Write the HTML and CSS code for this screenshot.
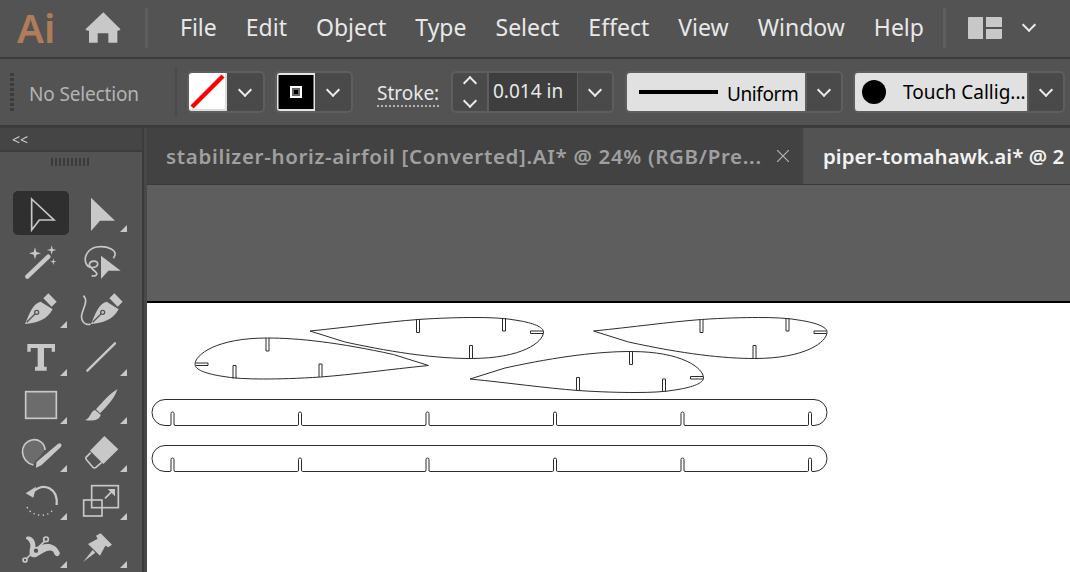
FILE: index.html
```html
<!DOCTYPE html>
<html lang="en">
<head>
  <meta charset="UTF-8" />
  <title>Adobe Illustrator</title>
  <link rel="stylesheet" href="styles.css">
</head>
<body>
  <div class="menubar">
    <span class="logo">Ai</span>
    <svg class="home" viewBox="255 36 108 96"><path d="M310 37L360 86Q365 92 352 92V128H325V100H293V128H267V92Q253 92 258 86Z"/></svg>
    <span class="vsep"></span>
    <nav class="menu">
      <span>File</span><span>Edit</span><span>Object</span><span>Type</span><span>Select</span><span>Effect</span><span>View</span><span>Window</span><span>Help</span>
    </nav>
    <span class="vsep"></span>
    <svg class="layout-icon" viewBox="0 0 34 22"><path d="M0 1Q0 0 1 0H15V22H1Q0 22 0 21ZM18 0H33Q34 0 34 1V10H18ZM18 12H34V21Q34 22 33 22H18Z"/></svg>
    <span class="chev layout-chev"></span>
  </div>

  <div class="controlbar">
    <span class="gripper"></span>
    <span class="selection-label">No Selection</span>
    <span class="ctrl-sep"></span>
    <div class="combo fill-combo">
      <svg class="swatch" viewBox="0 0 38 38"><rect width="38" height="38" fill="#fff"/><path d="M3 34L34 3" stroke="#f00" stroke-width="4.5"/><path d="M0 36H38V38H0ZM36 0H38V38H36Z" fill="#ddd"/></svg>
      <span class="chev-cell"><span class="chev"></span></span>
    </div>
    <div class="combo stroke-combo">
      <svg class="swatch" viewBox="0 0 38 38"><rect width="38" height="38" fill="#e4e4e4"/><rect x="1.5" y="2" width="35" height="34" fill="#000"/><rect x="13" y="13" width="12" height="12" fill="#fff"/><rect x="15" y="15" width="8" height="8" fill="#666"/><rect x="17" y="17" width="4" height="4" fill="#000"/></svg>
      <span class="chev-cell"><span class="chev"></span></span>
    </div>
    <span class="stroke-label">Stroke:</span>
    <div class="combo weight-combo">
      <span class="stepper"><span class="chev up"></span><span class="chev"></span></span>
      <span class="weight-value">0.014 in</span>
      <span class="chev-cell"><span class="chev"></span></span>
    </div>
    <div class="combo profile-combo">
      <span class="light-field profile-field"><span class="profile-line"></span><span class="profile-name">Uniform</span></span>
      <span class="chev-cell"><span class="chev"></span></span>
    </div>
    <div class="combo brush-combo">
      <span class="light-field brush-field"><span class="brush-dot"></span>Touch Callig...</span>
      <span class="chev-cell"><span class="chev"></span></span>
    </div>
  </div>

  <div class="workspace">
    <aside class="toolbar">
      <div class="toolbar-head"><span class="collapse">&lt;&lt;</span></div>
      <div class="toolbar-grip"></div>
      <div class="tools">
        <div class="tool active"><svg viewBox="39 198 168 132"><path d="M95 222L162 285H118L95 315Z" class="line"/></svg></div>
        <div class="tool more"><svg viewBox="219 198 168 132"><path d="M273 218L345 287H300L273 318Z"/></svg></div>

        <div class="tool"><svg viewBox="39 342 168 132"><path d="M82 455L145 395" class="line thick"/><path d="M105 367L109 381L123 385L109 389L105 403L101 389L87 385L101 381ZM155 361L158 372L169 375L158 378L155 389L152 378L141 375L152 372ZM160 400L162 408L170 410L162 412L160 420L158 412L150 410L158 408Z"/></svg></div>
        <div class="tool"><svg viewBox="219 342 168 132"><path d="M340 400C360 375 320 362 290 366C265 370 250 395 258 415C265 432 290 430 293 418C295 405 270 405 268 418C268 430 285 435 290 445C292 450 285 455 275 452" class="line"/><path d="M303 392L362 437H325L303 462Z"/></svg></div>

        <div class="tool more"><svg viewBox="39 486 168 132"><path d="M130 520L145 505L170 530L155 545ZM122 530C100 535 90 560 75 597C110 595 140 585 158 553Z"/><path d="M80 592L105 567" class="cut"/><circle cx="110" cy="562" r="6" class="cut"/></svg></div>
        <div class="tool"><svg viewBox="219 486 168 132"><g transform="translate(198 0)"><path d="M130 520L145 505L170 530L155 545ZM122 530C100 535 90 560 75 597C110 595 140 585 158 553Z"/><path d="M80 592L105 567" class="cut"/><circle cx="110" cy="562" r="6" class="cut"/></g><path d="M250 512C270 530 240 560 245 580C250 600 265 600 272 597" class="line"/></svg></div>

        <div class="tool more"><svg viewBox="39 -15 168 132"><path d="M82 12H165V35H155V24H132V80H140V92H105V80H113V24H92V35H82Z"/></svg></div>
        <div class="tool more"><svg viewBox="219 -15 168 132"><path d="M262 92L345 10" class="line thin-round"/></svg></div>

        <div class="tool more"><svg viewBox="39 129 168 132"><rect x="77" y="155" width="92" height="80" class="line grey-fill"/></svg></div>
        <div class="tool more"><svg viewBox="219 129 168 132"><path d="M352 148C345 175 320 200 300 220L288 208C310 185 330 160 352 148ZM285 210C270 215 272 235 255 240C275 245 300 240 302 224Z"/></svg></div>

        <div class="tool more"><svg viewBox="39 273 168 132"><path d="M100 375C60 365 55 310 95 300C115 295 135 310 135 330" class="line grey-fill"/><path d="M172 310C180 303 192 312 185 322L125 378L105 388L107 365Z" class="gap"/></svg></div>
        <div class="tool more"><svg viewBox="219 273 168 132"><path d="M313 288L355 328L310 372L270 332Z"/><path d="M272 338L258 352Q256 356 260 360L278 381Q283 386 288 382L305 367" class="line"/></svg></div>

        <div class="tool more"><svg viewBox="39 417 168 132"><path d="M100 455C130 425 175 445 170 495" class="line thick-ish"/><path d="M77 460L108 440L100 473Z"/><path d="M82 503C95 530 145 535 160 507" class="dots"/></svg></div>
        <div class="tool more"><svg viewBox="219 417 168 132"><rect x="275" y="437" width="80" height="66" class="line"/><rect x="251" y="480" width="55" height="48" class="line"/><path d="M315 475L338 452" class="line"/><path d="M323 447H345V469Z"/></svg></div>

        <div class="tool more"><svg viewBox="39 561 168 132"><path d="M80 590C100 585 110 610 105 625C125 610 165 600 180 640C175 655 165 650 160 635C145 625 130 640 110 650C95 655 85 650 90 625C95 610 85 600 77 596Z"/><path d="M75 660L140 598" class="line"/><circle cx="75" cy="660" r="6" class="line bg-fill"/><circle cx="138" cy="598" r="7" class="line bg-fill"/><circle cx="108" cy="632" r="9" class="line bg-fill"/></svg></div>
        <div class="tool more"><svg viewBox="219 561 168 132"><path d="M302 580L336 614L325 622L316 617L300 647L264 612L293 596L288 587ZM250 665L278 630L286 638Z"/></svg></div>
      </div>
    </aside>

    <main class="document">
      <div class="tabs">
        <div class="tab">
          <span class="tab-title">stabilizer-horiz-airfoil [Converted].AI* @ 24% (RGB/Pre...</span>
          <svg class="tab-close" viewBox="0 0 12 12"><path d="M0 0L12 12M12 0L0 12"/></svg>
        </div>
        <div class="tab current"><span class="tab-title">piper-tomahawk.ai* @ 2</span></div>
      </div>
      <div class="pasteboard"></div>
      <div class="artboard">
        <svg class="artwork" viewBox="147 303 923 269">
          <defs>
            <g id="airfoil">
              <path d="M310 331C350 327 385 322 418 319.5C440 318 460 317.5 475 317.5C490 317.5 505 318 518 320.5C533 323 543.5 327 543.5 332C543.5 342 522 358.5 471 358.5C440 358.5 400 354 345 342Z"/>
              <path d="M416.5 319.5V332.5H419.5V319.5M502.5 318V331H505.5V318M469.5 358.5V345.5H472.5V358.5M543 331H530.5V333.5H543"/>
            </g>
            <path id="spar" d="M165 399.5H814A13 13 0 0 1 814 425.5H812Q811.500 425.500 811.500 424V413.500Q811.500 412 810 412Q808.500 412 808.500 413.500V424Q808.500 425.500 807.500 425.500H685Q684 425.500 684 424V413.500Q684 412 682.500 412Q681 412 681 413.500V424Q681 425.500 680 425.500H557.500Q556.500 425.500 556.500 424V413.500Q556.500 412 555 412Q553.500 412 553.500 413.500V424Q553.500 425.500 552.500 425.500H430Q429 425.500 429 424V413.500Q429 412 427.500 412Q426 412 426 413.500V424Q426 425.500 425 425.500H302.500Q301.500 425.500 301.500 424V413.500Q301.500 412 300 412Q298.500 412 298.500 413.500V424Q298.500 425.500 297.500 425.500H175Q174 425.500 174 424V413.500Q174 412 172.500 412Q171 412 171 413.500V424Q171 425.500 170 425.500H165A13 13 0 0 1 165 399.500Z"/>
          </defs>
          <use href="#airfoil"/>
          <use href="#airfoil" x="283.500"/>
          <use href="#airfoil" transform="translate(738.500 696.500) scale(-1 -1)"/>
          <use href="#airfoil" transform="translate(160 710) scale(1 -1)"/>
          <use href="#spar"/>
          <use href="#spar" y="46"/>
        </svg>
      </div>
    </main>
  </div>
</body>
</html>
```

FILE: styles.css
```css
/* Reset */
* {
  box-sizing: border-box;
  margin: 0;
  padding: 0;
}
html, body {
  width: 1070px;
  height: 572px;
  overflow: hidden;
}
body {
  font-family: "Noto Sans", "Open Sans", sans-serif;
  background: #535353;
  color: #e8e8e8;
  display: flex;
  flex-direction: column;
}

/* Menu bar */
.menubar {
  height: 59px;
  flex: none;
  display: flex;
  align-items: center;
  padding: 0 0 2px 17px;
  border-bottom: 2px solid #3c3c3c;
}
.logo {
  width: 68px;
  font-size: 40px;
  font-weight: 600;
  line-height: 50px;
  color: #b07c5a;
}
.home {
  width: 36px;
  height: 32px;
  fill: #c8c8c8;
  margin-right: 24px;
}
.vsep {
  width: 3px;
  height: 40px;
  background: #5e5e5e;
}
.menu {
  display: flex;
  gap: 29px;
  margin: 0 19px 0 32px;
  padding-bottom: 2px;
  font-size: 23px;
}
.layout-icon {
  width: 34px;
  height: 22px;
  fill: #c8c8c8;
  margin: 0 22px;
}
.layout-chev {
  margin-top: -6px;
}

/* Chevrons */
.chev {
  display: block;
  width: 10px;
  height: 10px;
  border-right: 2px solid #ececec;
  border-bottom: 2px solid #ececec;
  transform: rotate(45deg);
}
.chev.up {
  transform: rotate(225deg);
}
.chev-cell {
  flex: 1;
  display: flex;
  align-items: center;
  justify-content: center;
  padding-bottom: 5px;
  background: #4a4a4a;
}

/* Control bar */
.controlbar {
  height: 69px;
  flex: none;
  display: flex;
  align-items: center;
  padding-left: 10px;
  border-bottom: 3px solid #3c3c3c;
}
.gripper {
  width: 4px;
  height: 38px;
  margin-right: 15px;
  background: repeating-linear-gradient(#3c3c3c 0 3px, transparent 3px 5px);
}
.selection-label {
  width: 146px;
  padding-top: 3px;
  font-size: 19px;
  letter-spacing: -0.15px;
  color: #b4b4b4;
}
.ctrl-sep {
  width: 2px;
  height: 50px;
  background: #4a4a4a;
  margin-right: 10px;
}
.combo {
  height: 42px;
  display: flex;
  border: 2px solid #5e5e5e;
  border-radius: 5px;
  background: #5e5e5e;
  overflow: hidden;
}
.swatch {
  width: 38px;
  height: 38px;
  flex: none;
}
.fill-combo { width: 78px; margin-right: 10px; }
.stroke-combo { width: 78px; }
.stroke-label {
  width: 62px;
  margin: 4px 12px 0 24px;
  font-size: 19px;
  line-height: 24px;
  border-bottom: 2px dotted #b0b0b0;
}
.weight-combo {
  width: 163px;
  margin-right: 11px;
}
.stepper {
  width: 34px;
  margin-right: 2px;
  display: flex;
  flex-direction: column;
  align-items: center;
  justify-content: center;
  gap: 8px;
  background: #4a4a4a;
}
.weight-value {
  width: 88px;
  margin-right: 1px;
  padding-left: 4px;
  font-size: 19px;
  line-height: 36px;
  background: #3e3e3e;
}
.light-field {
  display: flex;
  align-items: center;
  flex: none;
  background: #e1e1e1;
  color: #000;
  font-size: 19px;
}
.profile-combo {
  width: 218px;
  margin-right: 10px;
}
.profile-field {
  width: 178px;
  padding-left: 12px;
  margin-right: 2px;
}
.profile-line {
  width: 79px;
  height: 4px;
  margin-right: 9px;
  background: #000;
}
.profile-name {
  padding-top: 3px;
  letter-spacing: -0.4px;
}
.brush-combo { width: 212px; }
.brush-field {
  width: 172px;
  padding-left: 7px;
  margin-right: 2px;
  white-space: nowrap;
}
.brush-dot {
  width: 24px;
  height: 24px;
  flex: none;
  margin-right: 17px;
  border-radius: 50%;
  background: #000;
}

/* Left tools */
.workspace {
  flex: 1;
  display: flex;
  min-height: 0;
  background: #484848;
}
.toolbar {
  width: 144px;
  margin-right: 3px;
  flex: none;
  border-right: 2px solid #3c3c3c;
  background: #535353;
}
.toolbar-head {
  height: 24px;
  padding-left: 12px;
  background: #454545;
  border-bottom: 2px solid #3c3c3c;
}
.collapse {
  font-size: 14px;
  line-height: 20px;
  color: #d0d0d0;
}
.toolbar-grip {
  width: 38px;
  height: 8px;
  margin: 6px auto 0 51px;
  background: repeating-linear-gradient(90deg, #3a3a3a 0 2px, transparent 2px 4px);
}
.tools {
  display: grid;
  grid-template-columns: 58px 58px;
  grid-auto-rows: 48px;
  column-gap: 2px;
  padding: 23px 0 0 12px;
}
.tool {
  position: relative;
  width: 56px;
  height: 44px;
  margin: 2px 1px;
  border-radius: 5px;
}
.tool svg {
  display: block;
  width: 56px;
  height: 44px;
  fill: #c8c8c8;
}
.tool.active {
  background: #2f2f2f;
}
.tool.more::after {
  content: "";
  position: absolute;
  right: 2px;
  bottom: 3px;
  width: 7px;
  height: 7px;
  background: #c8c8c8;
  clip-path: polygon(100% 0, 100% 100%, 0 100%);
}
.line {
  fill: none;
  stroke: #c8c8c8;
  stroke-width: 5;
}
.thick { stroke-width: 13; stroke-linecap: round; }
.thin-round { stroke-width: 7; stroke-linecap: round; }
.thick-ish { stroke-width: 7; }
.grey-fill { fill: #6c6c6c; }
.bg-fill { fill: #535353; }
.cut {
  fill: none;
  stroke: #535353;
  stroke-width: 4;
}
.gap {
  stroke: #535353;
  stroke-width: 5;
}
.dots {
  fill: none;
  stroke: #c8c8c8;
  stroke-width: 5;
  stroke-linecap: round;
  stroke-dasharray: 0 14;
}

/* Document */
.document {
  flex: 1;
  min-width: 0;
  display: flex;
  flex-direction: column;
}
.tabs {
  height: 57px;
  flex: none;
  display: flex;
  background: #424242;
  border-bottom: 1px solid #3a3a3a;
  white-space: nowrap;
}
.tab {
  width: 656px;
  flex: none;
  display: flex;
  align-items: center;
  padding-left: 19px;
}
.tab-title {
  font-size: 20.5px;
  font-weight: 600;
  letter-spacing: 0.67px;
  color: #a0a0a0;
}
.tab-close {
  width: 12px;
  height: 12px;
  margin-left: 15px;
  stroke: #b4b4b4;
  stroke-width: 1.2;
  flex: none;
}
.tab.current {
  width: auto;
  flex: 1;
  background: #535353;
  padding-left: 20px;
}
.tab.current .tab-title {
  letter-spacing: 0;
  color: #f2f2f2;
}
.pasteboard {
  height: 118px;
  flex: none;
  background: #5e5e5e;
  border-bottom: 2px solid #000;
}
.artboard {
  flex: 1;
  background: #fff;
}
.artwork {
  display: block;
  width: 923px;
  height: 269px;
  fill: none;
  stroke: #2c2c2c;
  stroke-width: 1;
}
```
